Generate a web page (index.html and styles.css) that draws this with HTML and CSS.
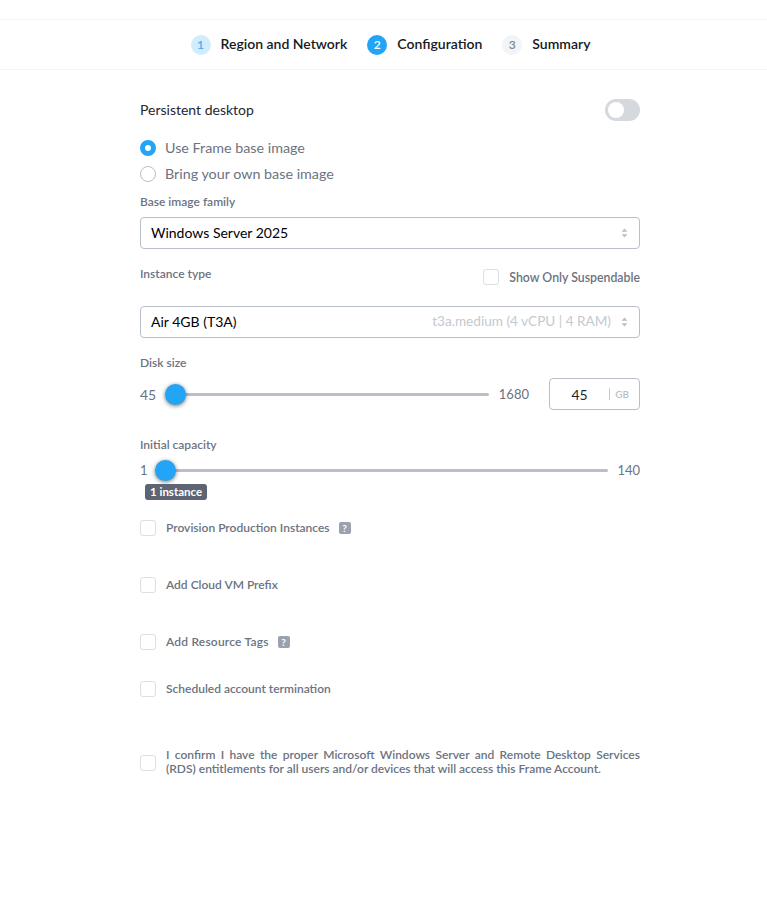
FILE: index.html
```html
<!DOCTYPE html>
<html>
<head>
  <title>Configuration</title>
  <meta charset="UTF-8">
  <link rel="stylesheet" href="styles.css">
</head>
<body>
  <div class="stepper">
    <div class="step done"><span class="step-num">1</span><span class="text">Region and Network</span></div>
    <div class="step active"><span class="step-num">2</span><span class="text">Configuration</span></div>
    <div class="step"><span class="step-num">3</span><span class="text">Summary</span></div>
  </div>

  <form class="form">
    <div class="persist-row">
      <span class="persist-label text">Persistent desktop</span>
      <span class="toggle"><span class="toggle-knob"></span></span>
    </div>

    <div class="radio-row"><span class="radio checked"></span><span class="text">Use Frame base image</span></div>
    <div class="radio-row"><span class="radio"></span><span class="text">Bring your own base image</span></div>

    <div class="label family-label">Base image family</div>
    <div class="select">
      <span class="select-value text">Windows Server 2025</span>
      <svg class="select-arrows" width="7" height="10" viewBox="0 0 7 10"><path d="M3.5 0.5 6.5 3.7H0.5Z M3.5 9.5 6.5 6.3H0.5Z" fill="#b8bfc9"/></svg>
    </div>

    <div class="instance-row">
      <div class="label">Instance type</div>
      <div class="suspend"><span class="checkbox"></span><span>Show Only Suspendable</span></div>
    </div>
    <div class="select">
      <span class="select-value text">Air 4GB (T3A)</span>
      <span class="select-hint text">t3a.medium (4 vCPU | 4 RAM)</span>
      <svg class="select-arrows" width="7" height="10" viewBox="0 0 7 10"><path d="M3.5 0.5 6.5 3.7H0.5Z M3.5 9.5 6.5 6.3H0.5Z" fill="#b8bfc9"/></svg>
    </div>

    <div class="label disk-label">Disk size</div>
    <div class="slider-row disk-row">
      <span class="slider-min">45</span>
      <div class="track"><span class="thumb"></span></div>
      <span class="slider-max">1680</span>
      <div class="disk-input"><span class="disk-value">45</span><span class="disk-unit">GB</span></div>
    </div>

    <div class="label capacity-label">Initial capacity</div>
    <div class="slider-row capacity-row">
      <span class="slider-min">1</span>
      <div class="track"><span class="thumb"></span><span class="tip">1 instance</span></div>
      <span class="slider-max">140</span>
    </div>

    <div class="check-row first"><span class="checkbox"></span><span>Provision Production Instances</span><span class="help">?</span></div>
    <div class="check-row prefix"><span class="checkbox"></span><span>Add Cloud VM Prefix</span></div>
    <div class="check-row tags"><span class="checkbox"></span><span>Add Resource Tags</span><span class="help">?</span></div>
    <div class="check-row term"><span class="checkbox"></span><span>Scheduled account termination</span></div>
    <div class="check-row confirm">
      <span class="checkbox"></span>
      <p class="text">I confirm I have the proper Microsoft Windows Server and Remote Desktop Services (RDS) entitlements for all users and/or devices that will access this Frame Account.</p>
    </div>
  </form>
</body>
</html>
```

FILE: styles.css
```css
* {
  box-sizing: border-box;
}
body {
  margin: 0;
  padding-left: 13px;
  background: #fff;
  color: #6b7380;
  font-family: 'Lato', 'Open Sans', sans-serif;
  font-size: 14px;
}
.text {
  padding-bottom: 2px;
}
.stepper {
  display: flex;
  justify-content: center;
  align-items: center;
  gap: 20px;
  height: 51px;
  margin-top: 19px;
  margin-left: -13px;
  border-top: 1px solid #f2f3f5;
  border-bottom: 1px solid #f2f3f5;
  padding-left: 14px;
}
.step {
  display: flex;
  align-items: center;
  gap: 10px;
  color: #16191d;
  font-size: 14px;
  font-weight: 600;
}
.step-num {
  width: 20px;
  height: 20px;
  border-radius: 50%;
  background: #f2f4f6;
  color: #7d8590;
  font-size: 12px;
  line-height: 20px;
  text-align: center;
}
.step.done .step-num {
  background: #d3ecfd;
  color: #46aef7;
}
.step.active .step-num {
  background: #22a5f7;
  color: #fff;
}
.form {
  width: 500px;
  margin: 0 auto;
}
.persist-row {
  display: flex;
  justify-content: space-between;
  align-items: center;
  height: 22px;
  margin-top: 29px;
  margin-bottom: 14px;
}
.persist-label {
  color: #22272e;
  font-size: 14px;
}
.toggle {
  display: block;
  width: 35px;
  height: 22px;
  padding: 3px;
  border-radius: 11px;
  background: #d5d9de;
}
.toggle-knob {
  display: block;
  width: 16px;
  height: 16px;
  border-radius: 50%;
  background: #fff;
}
.radio-row {
  display: flex;
  align-items: center;
  gap: 9px;
  height: 26px;
  font-size: 14.3px;
}
.radio {
  width: 16px;
  height: 16px;
  border: 1px solid #b8bfc9;
  border-radius: 50%;
}
.radio.checked {
  border: 5px solid #22a5f7;
}
.label {
  color: #6b7380;
  font-size: 12px;
  font-weight: 600;
  line-height: 16px;
}
.family-label {
  margin-top: 7px;
  margin-bottom: 7px;
}
.select {
  display: flex;
  align-items: center;
  height: 32px;
  padding: 0 11px 0 10px;
  border: 1px solid #b8bfc9;
  border-radius: 4px;
}
.select-value {
  flex-grow: 1;
  color: #000;
  font-size: 14px;
}
.select-hint {
  margin-right: 10px;
  color: #c4c9d0;
  font-size: 13.6px;
}
.instance-row {
  display: flex;
  justify-content: space-between;
  height: 57px;
  padding-top: 17px;
}
.suspend {
  display: flex;
  align-items: center;
  gap: 10px;
  height: 16px;
  margin-top: 3px;
  font-size: 12.3px;
  font-weight: 600;
}
.checkbox {
  flex-shrink: 0;
  width: 16px;
  height: 16px;
  border: 1px solid #dcdfe3;
  border-radius: 3px;
}
.disk-label {
  margin-top: 17px;
}
.slider-row {
  display: flex;
  align-items: center;
  font-size: 13px;
}
.disk-row {
  height: 32px;
  margin-top: 7px;
}
.disk-row .slider-min {
  font-size: 14px;
}
.track {
  position: relative;
  flex-grow: 1;
  height: 3px;
  margin: 0 10px 0 9px;
  border-radius: 2px;
  background: #b8bfc9;
}
.capacity-row .slider-min {
  width: 5px;
}
.capacity-row .track {
  margin-left: 10px;
  margin-right: 9px;
}
.thumb {
  position: absolute;
  top: -9px;
  left: 0;
  width: 21px;
  height: 21px;
  border-radius: 50%;
  background: #22a5f7;
  box-shadow: 0 1px 4px rgba(0, 0, 0, 0.55);
}
.disk-input {
  display: flex;
  align-items: center;
  width: 91px;
  height: 32px;
  margin-left: 20px;
  padding-right: 10px;
  border: 1px solid #b8bfc9;
  border-radius: 4px;
}
.disk-value {
  flex-grow: 1;
  color: #22272e;
  font-size: 14px;
  text-align: center;
}
.disk-unit {
  padding-left: 5px;
  border-left: 1px solid #c4c9d0;
  color: #b8bfc9;
  font-size: 10px;
  font-weight: 600;
  line-height: 12px;
}
.capacity-label {
  margin-top: 27px;
}
.capacity-row {
  height: 20px;
  margin-top: 7px;
}
.tip {
  position: absolute;
  top: 15px;
  left: -10px;
  padding: 0 5px;
  border-radius: 3px;
  background: #5d6473;
  color: #fff;
  font-size: 11.5px;
  font-weight: 700;
  line-height: 16px;
  white-space: nowrap;
}
.check-row {
  display: flex;
  align-items: center;
  gap: 10px;
  font-size: 12px;
  font-weight: 600;
  line-height: 14px;
}
.first {
  margin-top: 40px;
}
.prefix {
  margin-top: 41px;
}
.tags {
  margin-top: 41px;
  letter-spacing: 0.2px;
}
.term {
  margin-top: 31px;
}
.confirm {
  margin-top: 51px;
}
.confirm p {
  margin: 0;
  text-align: justify;
}
.help {
  width: 12px;
  height: 12px;
  margin-left: -1px;
  border-radius: 2px;
  background: #9aa2ae;
  color: #fff;
  font-size: 10px;
  font-weight: 700;
  line-height: 12px;
  text-align: center;
}
```
